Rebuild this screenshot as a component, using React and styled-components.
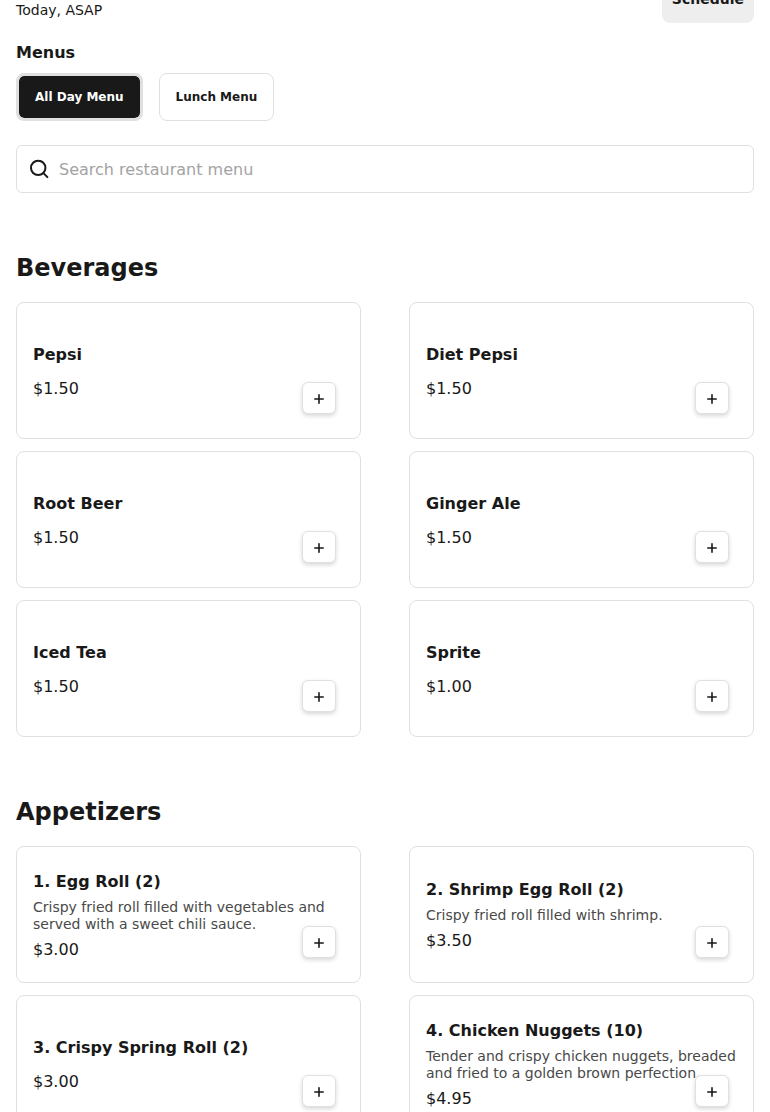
import React, { useState } from 'react';
import styled, { createGlobalStyle } from 'styled-components';

const menus = ['All Day Menu', 'Lunch Menu'];

const categories = [
  {
    title: 'Beverages',
    items: [
      { name: 'Pepsi', price: '$1.50' },
      { name: 'Diet Pepsi', price: '$1.50' },
      { name: 'Root Beer', price: '$1.50' },
      { name: 'Ginger Ale', price: '$1.50' },
      { name: 'Iced Tea', price: '$1.50' },
      { name: 'Sprite', price: '$1.00' },
    ],
  },
  {
    title: 'Appetizers',
    items: [
      {
        name: '1. Egg Roll (2)',
        description: 'Crispy fried roll filled with vegetables and served with a sweet chili sauce.',
        price: '$3.00',
      },
      {
        name: '2. Shrimp Egg Roll (2)',
        description: 'Crispy fried roll filled with shrimp.',
        price: '$3.50',
      },
      { name: '3. Crispy Spring Roll (2)', price: '$3.00' },
      {
        name: '4. Chicken Nuggets (10)',
        description: 'Tender and crispy chicken nuggets, breaded and fried to a golden brown perfection.',
        price: '$4.95',
      },
    ],
  },
];

const MenuItem = ({ item }) => (
  <Card>
    <ItemName>{item.name}</ItemName>
    <Description>{item.description}</Description>
    <Price>{item.price}</Price>
    <AddButton type="button" aria-label={`Add ${item.name}`}>
      <svg width="10" height="10" viewBox="0 0 10 10" aria-hidden="true">
        <path d="M5 0.8v8.4M0.8 5h8.4" stroke="currentColor" strokeWidth="1.6" strokeLinecap="round" />
      </svg>
    </AddButton>
  </Card>
);

const App = () => {
  const [active, setActive] = useState(menus[0]);
  const [query, setQuery] = useState('');

  return (
    <>
      <GlobalStyle />
      <Page>
        <Delivery>
          <DeliveryTime>Today, ASAP</DeliveryTime>
          <ScheduleButton type="button">Schedule</ScheduleButton>
        </Delivery>
        <MenusTitle>Menus</MenusTitle>
        <MenuTabs>
          {menus.map((menu) => (
            <MenuTab
              key={menu}
              type="button"
              $active={menu === active}
              aria-pressed={menu === active}
              onClick={() => setActive(menu)}
            >
              {menu}
            </MenuTab>
          ))}
        </MenuTabs>
        <SearchBox>
          <svg width="24" height="24" viewBox="0 0 24 24" fill="none" aria-hidden="true">
            <circle cx="11.2" cy="10.9" r="7.2" stroke="currentColor" strokeWidth="2" />
            <path d="M16.4 16.1L20.4 20.1" stroke="currentColor" strokeWidth="2" strokeLinecap="round" />
          </svg>
          <SearchInput
            type="text"
            aria-label="Search restaurant menu"
            placeholder="Search restaurant menu"
            value={query}
            onChange={(e) => setQuery(e.target.value)}
          />
        </SearchBox>
        {categories.map((category) => (
          <Category key={category.title}>
            <CategoryTitle>{category.title}</CategoryTitle>
            <Grid>
              {category.items.map((item) => (
                <MenuItem key={item.name} item={item} />
              ))}
            </Grid>
          </Category>
        ))}
      </Page>
    </>
  );
};

const GlobalStyle = createGlobalStyle`
  * {
    box-sizing: border-box;
  }

  body {
    margin: 0;
    background: #fff;
    color: #191919;
    font-family: 'DejaVu Sans', sans-serif;
  }

  button,
  input {
    font-family: inherit;
    color: inherit;
  }

  h1, h2, h3, p {
    margin: 0;
  }
`;

const Page = styled.main`
  padding: 0 16px;
`;

/* the row is partly scrolled off the top */
const Delivery = styled.div`
  display: flex;
  justify-content: space-between;
  align-items: flex-end;
  margin-top: -25px;
`;

const DeliveryTime = styled.p`
  font-size: 14px;
  line-height: 20px;
  padding-bottom: 3px;
`;

const ScheduleButton = styled.button`
  height: 48px;
  padding: 0 10px;
  border: none;
  border-radius: 8px;
  background: #eee;
  font-size: 14px;
  font-weight: bold;
`;

const MenusTitle = styled.h1`
  margin-top: 20px;
  font-size: 16px;
  line-height: 20px;
`;

const MenuTabs = styled.div`
  display: flex;
  gap: 16px;
  margin-top: 10px;
`;

const MenuTab = styled.button`
  height: 48px;
  padding: 0 16px;
  border: ${(props) => (props.$active ? '3px' : '1px')} solid #e0e0e0;
  border-radius: 8px;
  background: ${(props) => (props.$active ? '#191919' : '#fff')};
  background-clip: padding-box;
  color: ${(props) => (props.$active ? '#fff' : '#191919')};
  font-size: 12px;
  font-weight: bold;
  cursor: pointer;
`;

const SearchBox = styled.div`
  display: flex;
  align-items: center;
  gap: 8px;
  height: 48px;
  margin-top: 24px;
  padding: 0 10px;
  border: 1px solid #e0e0e0;
  border-radius: 6px;
`;

const SearchInput = styled.input`
  flex: 1;
  min-width: 0;
  padding: 0;
  border: none;
  outline: none;
  background: none;
  font-size: 16px;

  &::placeholder {
    color: #a3a3a3;
  }
`;

const Category = styled.section`
  margin-top: 60px;
`;

const CategoryTitle = styled.h2`
  margin-bottom: 18px;
  font-size: 24px;
  line-height: 31px;
`;

const Grid = styled.div`
  display: grid;
  grid-template-columns: 1fr 1fr;
  gap: 12px 48px;
`;

const Card = styled.article`
  position: relative;
  display: flex;
  flex-direction: column;
  justify-content: center;
  min-height: 137px;
  padding: 18px 16px 16px;
  border: 1px solid #e0e0e0;
  border-radius: 8px;
`;

const ItemName = styled.h3`
  font-size: 16px;
  line-height: 20px;
`;

const Description = styled.p`
  margin: 7px 0;
  color: #494949;
  font-size: 14px;
  line-height: 17px;
`;

const Price = styled.p`
  font-size: 16px;
  line-height: 20px;
`;

const AddButton = styled.button`
  position: absolute;
  right: 24px;
  bottom: 24px;
  display: flex;
  align-items: center;
  justify-content: center;
  width: 34px;
  height: 32px;
  padding: 2px 0 0;
  border: 1px solid #e0e0e0;
  border-radius: 6px;
  background: #fff;
  box-shadow: 0 2px 4px rgba(0, 0, 0, 0.16);
  cursor: pointer;
`;

export default App;
